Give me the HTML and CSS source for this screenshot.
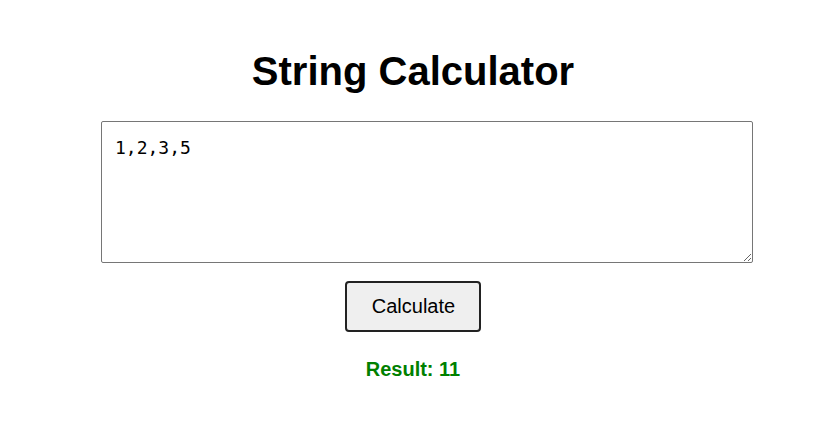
FILE: index.html
```html
<!DOCTYPE html>
<html lang="en">
<head>
<meta charset="utf-8">
<title>String Calculator</title>
<link rel="stylesheet" href="styles.css">
</head>
<body>
<main class="app">
  <h1 class="title">String Calculator</h1>
  <textarea class="input">1,2,3,5</textarea>
  <button class="calc-btn" type="button">Calculate</button>
  <p class="result">Result: 11</p>
</main>
</body>
</html>
```
FILE: styles.css
```css
html, body {
  margin: 0;
  background: #ffffff;
}
body {
  font-family: "Liberation Sans", Arial, sans-serif;
  color: #000;
}
.app {
  width: 624px;
  margin: 0 auto;
  display: flex;
  flex-direction: column;
  align-items: center;
}
.title {
  margin: 48px 0 27px;
  font-size: 40px;
  font-weight: bold;
  line-height: 46px;
}
.input {
  align-self: flex-start;
  box-sizing: content-box;
  width: 100%;
  height: 116px;
  padding: 15px 13px 9px;
  border: 1px solid #767676;
  border-radius: 2px;
  font-family: "DejaVu Sans Mono", monospace;
  font-size: 18px;
  color: #000;
  margin: 0;
  display: block;
}
.calc-btn {
  margin-top: 18px;
  padding: 12px 24px 12px 25px;
  font-family: "Liberation Sans", Arial, sans-serif;
  font-size: 20px;
  line-height: 23px;
  background: #efefef;
  color: #000;
  border: 2px solid #222;
  border-radius: 4px;
}
.result {
  margin: 26px 0 0;
  font-size: 20px;
  font-weight: bold;
  line-height: 23px;
  color: #008000;
}
```
